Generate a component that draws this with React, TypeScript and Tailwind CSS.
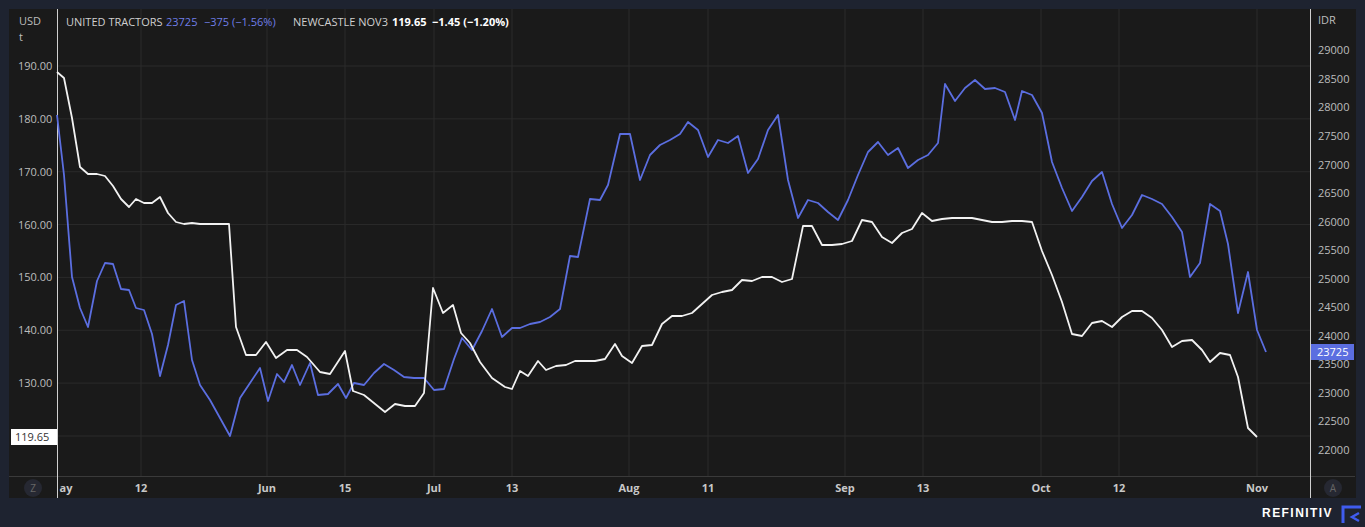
const white: [number, number][] = [
  [57,72],[64,78],[72,118],[80,167],[88,174],[97,174],[105,176],[113,186],[121,199],[129,207],[136,199],[144,203],[152,203],[160,197],[168,213],[176,222],[184,224],[192,223],[200,224],[210,224],[220,224],[229,224],[236,327],[246,355],[256,355],[266,342],[276,358],[287,350],[297,350],[307,357],[320,372],[330,374],[345,351],[353,391],[364,395],[385,412],[395,404],[405,406],[415,406],[424,393],[433,288],[443,313],[453,305],[461,333],[470,343],[480,362],[492,378],[505,387],[512,389],[520,371],[528,376],[538,361],[546,370],[556,366],[566,365],[575,361],[585,361],[595,361],[605,359],[615,344],[622,356],[632,363],[642,346],[652,345],[662,324],[672,316],[682,316],[692,313],[702,304],[712,295],[722,292],[732,290],[742,280],[752,281],[762,277],[772,277],[782,282],[792,279],[803,226],[812,226],[822,245],[832,245],[842,244],[852,241],[862,220],[872,222],[882,237],[892,243],[902,233],[912,229],[922,213],[932,221],[942,219],[952,218],[962,218],[972,218],[982,220],[992,222],[1002,222],[1012,221],[1022,221],[1032,222],[1042,251],[1052,275],[1062,302],[1072,334],[1082,336],[1092,323],[1102,321],[1112,327],[1122,317],[1132,311],[1142,311],[1152,318],[1162,330],[1172,347],[1182,341],[1192,340],[1202,350],[1210,362],[1220,353],[1230,355],[1238,377],[1248,428],[1257,437],
]

const blue: [number, number][] = [
  [57,115],[64,175],[72,277],[80,308],[88,327],[97,281],[105,263],[113,264],[121,289],[129,290],[136,308],[144,310],[152,334],[160,376],[168,345],[176,305],[184,301],[192,360],[200,385],[210,400],[220,418],[230,436],[240,398],[250,383],[260,368],[268,401],[277,374],[284,382],[292,365],[300,385],[310,363],[318,395],[328,394],[338,384],[346,398],[354,383],[364,385],[374,373],[384,364],[394,370],[404,377],[414,378],[424,378],[434,390],[444,389],[454,359],[462,338],[472,350],[482,331],[492,309],[502,337],[512,328],[520,328],[530,324],[540,322],[550,317],[560,309],[570,256],[578,257],[590,199],[600,200],[608,185],[620,134],[630,134],[640,180],[650,155],[660,145],[670,140],[680,134],[688,122],[698,130],[708,157],[718,140],[728,143],[738,136],[748,173],[758,159],[768,130],[778,115],[788,180],[798,218],[808,200],[818,203],[828,212],[838,220],[848,200],[858,175],[868,152],[878,142],[888,155],[898,148],[908,168],[918,160],[928,155],[938,143],[945,84],[955,101],[965,88],[975,80],[985,89],[995,88],[1005,92],[1015,120],[1022,91],[1032,95],[1042,113],[1052,162],[1062,188],[1072,211],[1082,197],[1092,181],[1102,172],[1112,204],[1122,228],[1132,215],[1142,195],[1152,199],[1162,204],[1172,217],[1182,232],[1190,277],[1200,263],[1210,204],[1220,211],[1228,244],[1238,313],[1248,272],[1257,330],[1266,352],
]

const pts = (p: [number, number][]) => p.map(([x, y]) => `${x},${y}`).join(' ')

const leftTicks = [190, 180, 170, 160, 150, 140, 130]
const leftY = (v: number) => 66 + (190 - v) * 5.285
const rightTicks = [29000, 28500, 28000, 27500, 27000, 26500, 26000, 25500, 25000, 24500, 24000, 23500, 23000, 22500, 22000]
const rightY = (v: number) => 450 - ((v - 22000) / 1000) * 57.1
const xTicks: [string, number][] = [
  ['ay', 65], ['12', 141], ['Jun', 267], ['15', 345], ['Jul', 434], ['13', 512], ['Aug', 629], ['11', 708],
  ['Sep', 845], ['13', 923], ['Oct', 1041], ['12', 1119], ['Nov', 1257],
]

export default function App() {
  return (
    <div className="w-[1365px] h-[527px] bg-[#1e2330] flex flex-col overflow-hidden" style={{ fontFamily: '"Open Sans", "Liberation Sans", sans-serif' }}>
      <div className="mx-[9px] mt-[9px] h-[489px] bg-[#1a1a1a]">
        <svg width="1346" height="489" viewBox="9 9 1346 489" className="block">
          {leftTicks.map((v) => (
            <line key={v} x1={57} x2={1310} y1={leftY(v)} y2={leftY(v)} stroke="#2a2a2a" />
          ))}
          <line x1={57} x2={1310} y1={436} y2={436} stroke="#2a2a2a" />
          {xTicks.map(([, x], i) => i > 0 && (
            <line key={i} x1={x} x2={x} y1={9} y2={476} stroke="#2a2a2a" />
          ))}
          <line x1={9} x2={1355} y1={476.5} y2={476.5} stroke="#3a3a3a" />
          <line x1={57.5} x2={57.5} y1={9} y2={498} stroke="#d0d0d0" />
          <line x1={1310.5} x2={1310.5} y1={9} y2={498} stroke="#cfcfcf" />

          <polyline points={pts(blue)} fill="none" stroke="#5b6ee0" strokeWidth={1.8} strokeLinejoin="round" />
          <polyline points={pts(white)} fill="none" stroke="#f2f2f2" strokeWidth={1.8} strokeLinejoin="round" />

          <g fontSize="11" fill="#bdbdbd">
            <text x={19} y={25}>USD</text>
            <text x={19} y={41}>t</text>
            {leftTicks.map((v) => (
              <text key={v} x={18} y={leftY(v) + 4}>{v.toFixed(2)}</text>
            ))}
            <text x={1318} y={24}>IDR</text>
            {rightTicks.map((v) => (
              <text key={v} x={1318} y={rightY(v) + 4}>{v}</text>
            ))}
          </g>
          <rect x={11} y={429} width={46} height={16} fill="#ffffff" />
          <text x={15} y={441} fontSize="11" fill="#333">119.65</text>
          <rect x={1311} y={344} width={43} height={16} fill="#5b6ee0" />
          <text x={1317} y={356} fontSize="11" fill="#ffffff">23725</text>

          <g fontSize="11">
            <text x={66} y={26} fill="#cfcfcf">UNITED TRACTORS</text>
            <text x={166} y={26} fill="#6f7ee8">23725</text>
            <text x={204} y={26} fill="#6f7ee8">−375 (−1.56%)</text>
            <text x={293} y={26} fill="#cfcfcf">NEWCASTLE NOV3</text>
            <text x={392} y={26} fill="#ffffff" fontWeight="bold">119.65</text>
            <text x={432} y={26} fill="#ffffff" fontWeight="bold">−1.45 (−1.20%)</text>
          </g>

          <g fontSize="11" fontWeight="bold" fill="#c8c8c8" textAnchor="middle">
            {xTicks.map(([l, x], i) => (
              <text key={i} x={i === 0 ? 66 : x} y={492}>{l}</text>
            ))}
          </g>
          <circle cx={33} cy={488} r={9} fill="#262832" />
          <text x={33} y={492} fontSize="10" fill="#666" textAnchor="middle">Z</text>
          <circle cx={1333} cy={488} r={9} fill="#262832" />
          <text x={1333} y={492} fontSize="10" fill="#666" textAnchor="middle">A</text>
        </svg>
      </div>
      <div className="flex-1 flex items-center justify-end pr-[2px] gap-[8px]">
        <span className="text-white text-[12px] font-bold tracking-[0.12em]" style={{ fontFamily: '"Liberation Sans", sans-serif' }}>REFINITIV</span>
        <svg width="22" height="20" viewBox="0 0 22 20">
          <path d="M2 20 V4 H20" fill="none" stroke="#3f5cf0" strokeWidth="3" />
          <path d="M18 10 L11 14 L18 18" fill="none" stroke="#3f5cf0" strokeWidth="2.5" />
        </svg>
      </div>
    </div>
  )
}
